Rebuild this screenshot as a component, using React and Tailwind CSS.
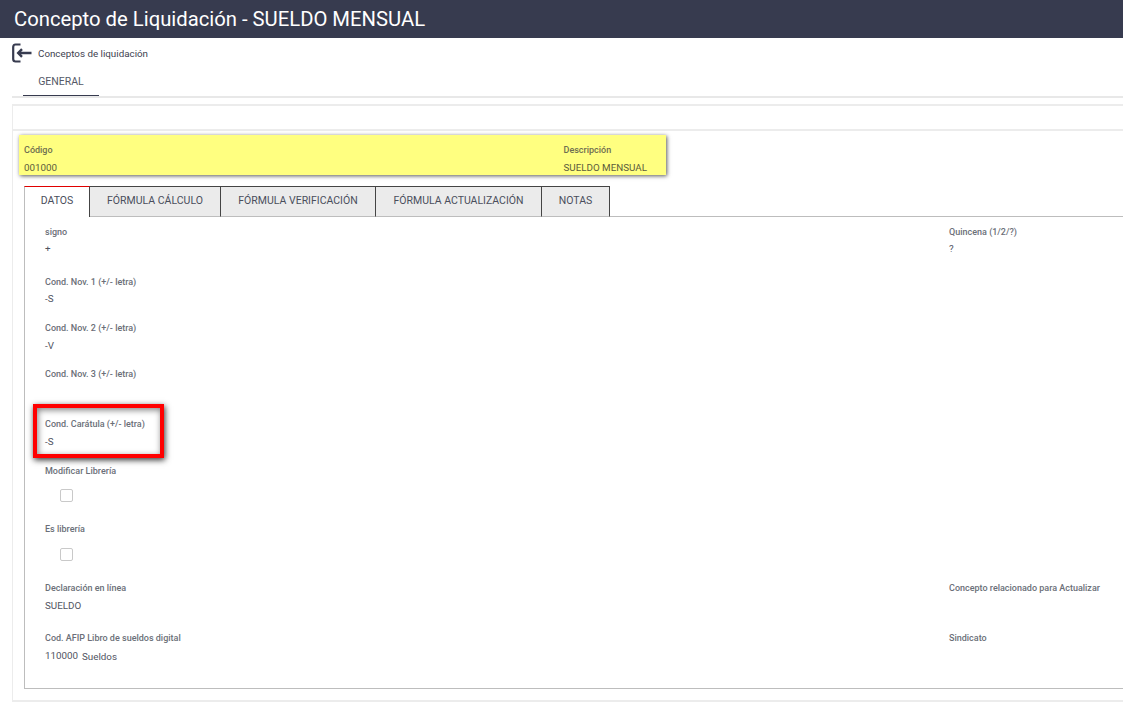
const tabs = [
  { name: "DATOS", w: "w-[66px]" },
  { name: "FÓRMULA CÁLCULO", w: "w-[131px]" },
  { name: "FÓRMULA VERIFICACIÓN", w: "w-[155px]" },
  { name: "FÓRMULA ACTUALIZACIÓN", w: "w-[166px]" },
  { name: "NOTAS", w: "w-[68px]" },
];

function Label({ children }) {
  return <div className="h-[14px] text-[9px] leading-[14px] font-medium text-[#6b6f78]">{children}</div>;
}

function Field({ label, value, className, gap = "mt-[4px]" }) {
  return (
    <div className={className}>
      <Label>{label}</Label>
      <div className={gap + " h-[14px] text-[9.8px] leading-[14px] text-[#50545f]"}>{value}</div>
    </div>
  );
}

function Check({ className }) {
  return <div className={"ml-[15px] h-[13px] w-[13px] rounded-[2px] border border-[#c9c9c9] bg-white " + className}></div>;
}

export default function App() {
  return (
    <div className="h-[703px] w-[1123px] overflow-hidden bg-white font-['Roboto',sans-serif]">
      <div className="flex h-[38px] items-center bg-[#373b4f] pl-[14px] text-[20.25px] text-white">
        Concepto de Liquidación - SUELDO MENSUAL
      </div>

      <div className="flex h-[30px] items-center pl-[12px]">
        <svg width="20" height="20" viewBox="0 0 20 20" fill="none" stroke="#373b4f" strokeWidth="2">
          <path d="M8.5 1.5H3.5Q1.2 1.5 1.2 4V16Q1.2 18.5 3.5 18.5H8.5" strokeWidth="2.2" />
          <path d="M19.5 10H6.5M10 6.2L6.2 10L10 13.8" strokeWidth="2.4" />
        </svg>
        <span className="ml-[6px] mt-[3px] text-[9.8px] text-[#3e4250]">Conceptos de liquidación</span>
      </div>

      <div className="ml-[12px] h-[30px] border-b-2 border-[#e8e8e8]">
        <div className="ml-[11px] h-[28px] w-[76px] border-b border-[#373b4f] pt-[7px] text-center text-[10.5px] leading-[14px] text-[#555967]">
          GENERAL
        </div>
      </div>

      <div className="relative ml-[12px] mt-[6px] h-[598px] border-b-2 border-l border-[#ececec]">
        <div className="h-[27px] border-t-2 border-b-2 border-[#ececec]"></div>

        <div className="ml-[6px] mt-[4px] flex h-[40px] w-[647px] bg-[#ffff80] pl-[5px] shadow-[1px_1px_4px_rgba(0,0,0,0.65)]">
          <div className="w-[539.5px] pt-[8px]">
            <div className="text-[9px] leading-[14px] font-medium text-[#6e6e50]">Código</div>
            <div className="mt-[4px] text-[9.8px] leading-[14px] text-[#5c5c3c]">001000</div>
          </div>
          <div className="pt-[8px]">
            <div className="text-[9px] leading-[14px] font-medium text-[#6e6e50]">Descripción</div>
            <div className="mt-[4px] text-[9.8px] leading-[14px] text-[#5c5c3c]">SUELDO MENSUAL</div>
          </div>
        </div>

        <div className="ml-[11px] mt-[11px] flex h-[31px] border-b border-[#bdbdbd]">
          {tabs.map((t, i) => (
            <div
              key={t.name}
              className={
                t.w +
                " flex h-[31px] items-center justify-center pb-[2px] text-[10.5px] font-normal text-[#4a4e5c] " +
                (i == 0
                  ? "border-t border-l border-r border-t-[#e00000] border-l-[#bdbdbd] border-r-[#444] bg-white"
                  : "border-t border-r border-[#444] border-b border-b-[#bdbdbd] bg-[#ebebeb]")
              }
            >
              {t.name}
            </div>
          ))}
        </div>

        <div className="ml-[11px] h-[472px] border-b border-l border-[#bdbdbd] pl-[20px] pt-[8px]">
          <div className="flex h-[50px]">
            <Field className="w-[904px]" label="signo" value="+" gap="mt-[3px]" />
            <Field label="Quincena (1/2/?)" value="?" gap="mt-[3px]" />
          </div>
          <Field className="h-[46px]" label="Cond. Nov. 1 (+/- letra)" value="-S" gap="mt-[3px]" />
          <Field className="h-[46px]" label="Cond. Nov. 2 (+/- letra)" value="-V" />
          <Field className="h-[50px]" label="Cond. Nov. 3 (+/- letra)" value="" />
          <Field className="h-[47px]" label="Cond. Carátula (+/- letra)" value="-S" />
          <Label>Modificar Librería</Label>
          <Check className="mt-[11px]" />
          <div className="mt-[20px]">
            <Label>Es librería</Label>
          </div>
          <Check className="mt-[12px]" />
          <div className="mt-[20px] flex h-[50px]">
            <Field className="w-[904px]" label="Declaración en línea" value="SUELDO" />
            <Label>Concepto relacionado para Actualizar</Label>
          </div>
          <div className="flex">
            <div className="w-[904px]">
              <Label>Cod. AFIP Libro de sueldos digital</Label>
              <div className="mt-[4px] flex h-[14px] text-[9.8px] leading-[14px] text-[#50545f]">
                110000
                <span className="ml-[4px] mt-[1px]">Sueldos</span>
              </div>
            </div>
            <Label>Sindicato</Label>
          </div>
        </div>

        {/* red highlight over the field */}
        <div className="absolute left-[20px] top-[300px] h-[54px] w-[131px] border-[4px] border-[#ff0000] shadow-[1px_2px_6px_rgba(0,0,0,0.8),inset_1px_2px_6px_rgba(0,0,0,0.5)]"></div>
      </div>
    </div>
  );
}
